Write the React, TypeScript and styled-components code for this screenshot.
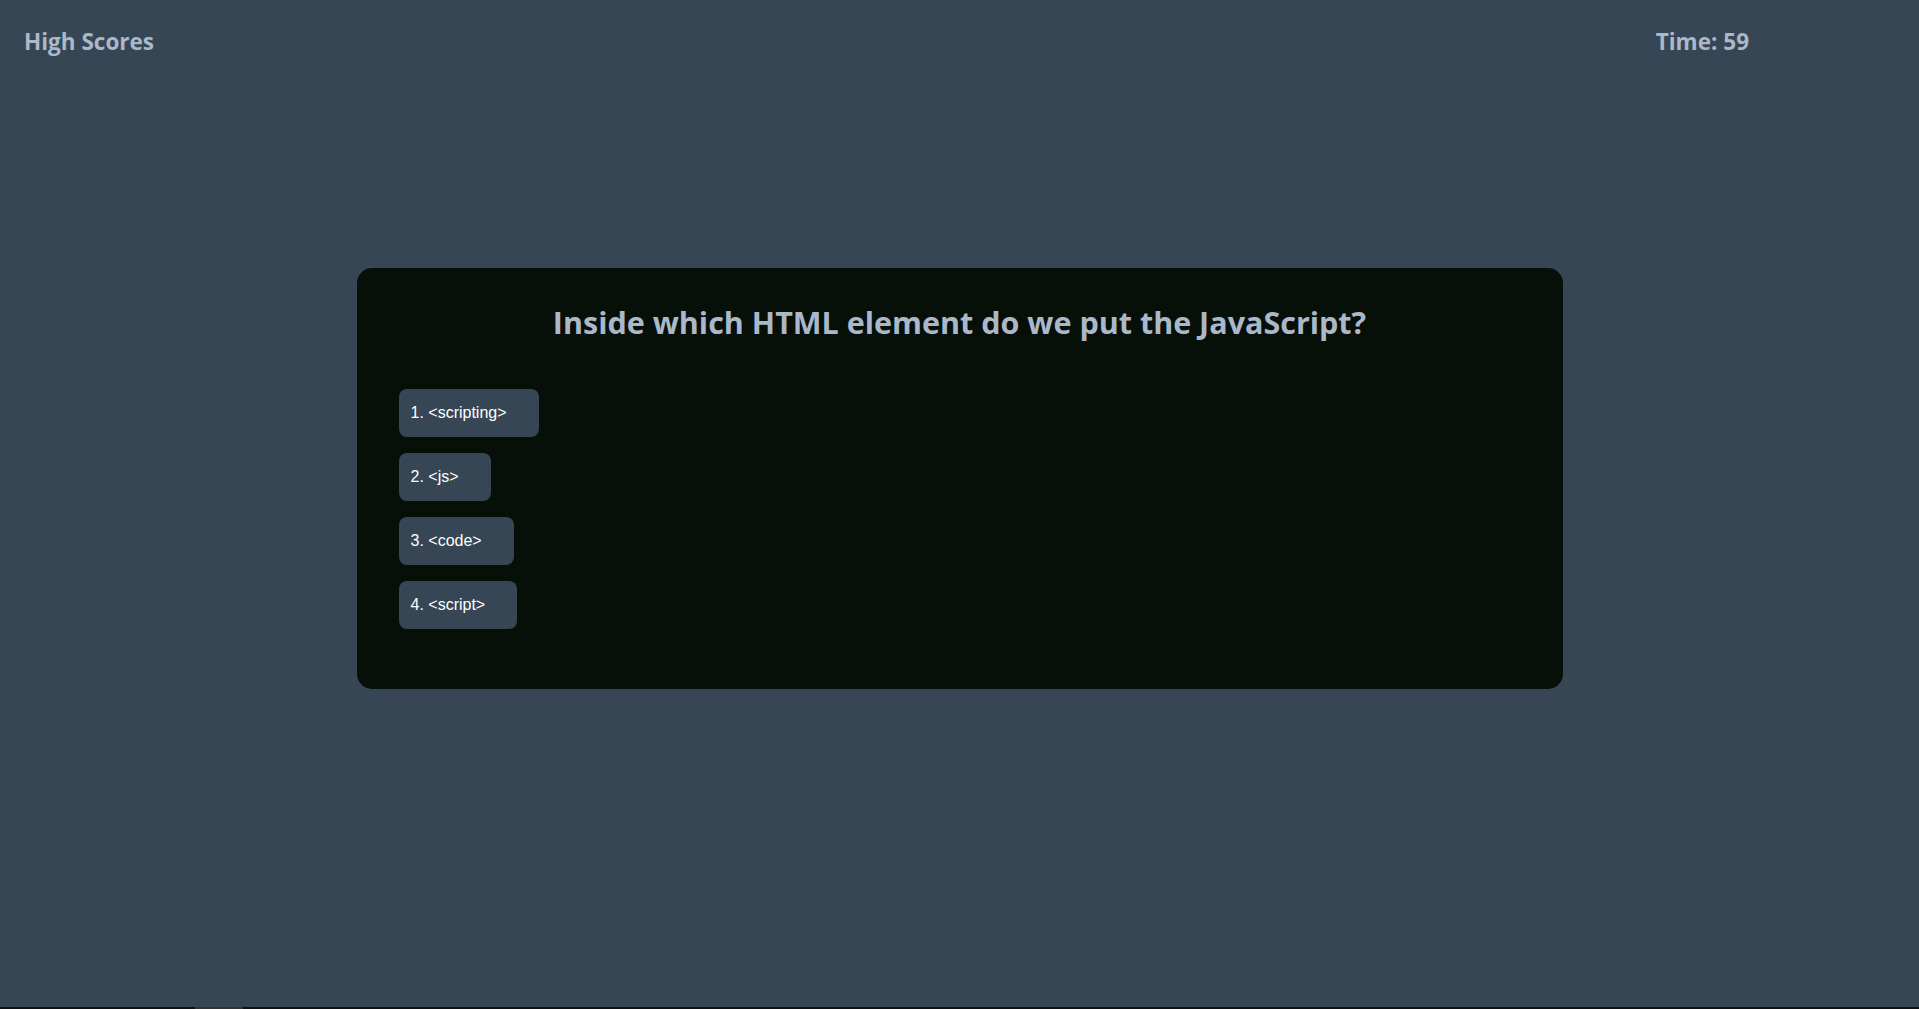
import React from "react";
import styled, { createGlobalStyle } from "styled-components";

const Global = createGlobalStyle`
  html, body { margin: 0; padding: 0; }
  body {
    background: #374654;
    font-family: "Open Sans", "DejaVu Sans", sans-serif;
    overflow: hidden;
  }
`;

const Page = styled.div`
  min-height: 100vh;
  display: flex;
  flex-direction: column;
`;

const Main = styled.main`
  flex: 1;
`;

const Header = styled.header`
  display: flex;
  justify-content: space-between;
  align-items: flex-start;
  padding: 27px 170px 0 24px;
  height: 41px;
`;

const HeaderText = styled.div`
  color: #aab8ca;
  font-family: "Open Sans", sans-serif;
  font-weight: 700;
  font-size: 22.5px;
  line-height: 30px;
`;

const Card = styled.section`
  width: 1206px;
  margin: 200px auto 0;
  box-sizing: border-box;
  background: #071008;
  border-radius: 15px;
  padding: 33px 42px 60px;
  min-height: 421px;
`;

const Question = styled.h1`
  margin: 0 0 46px;
  text-align: center;
  color: #aab8ca;
  font-family: "Open Sans", sans-serif;
  font-weight: 700;
  font-size: 30.5px;
  line-height: 42px;
`;

const Choices = styled.div`
  display: flex;
  flex-direction: column;
  align-items: flex-start;
  gap: 16px;
`;

const Choice = styled.button`
  background: #374654;
  color: #ffffff;
  border: none;
  border-radius: 8px;
  height: 48px;
  padding: 0 32px 0 12px;
  font-family: "Liberation Sans", Arial, sans-serif;
  font-size: 16px;
  cursor: pointer;
`;

const ScrollStrip = styled.div`
  height: 2px;
  background: #111111;
  display: flex;
`;

const Thumb = styled.div`
  margin-left: 195px;
  width: 48px;
  background: #333333;
`;

const choices = ["<scripting>", "<js>", "<code>", "<script>"];

export default function App() {
  return (
    <Page>
      <Global />
      <Main>
        <Header>
          <HeaderText>High Scores</HeaderText>
          <HeaderText>Time: 59</HeaderText>
        </Header>
        <Card>
          <Question>Inside which HTML element do we put the JavaScript?</Question>
          <Choices>
            {choices.map((c, i) => (
              <Choice key={c}>{`${i + 1}. ${c}`}</Choice>
            ))}
          </Choices>
        </Card>
      </Main>
      <ScrollStrip>
        <Thumb />
      </ScrollStrip>
    </Page>
  );
}
